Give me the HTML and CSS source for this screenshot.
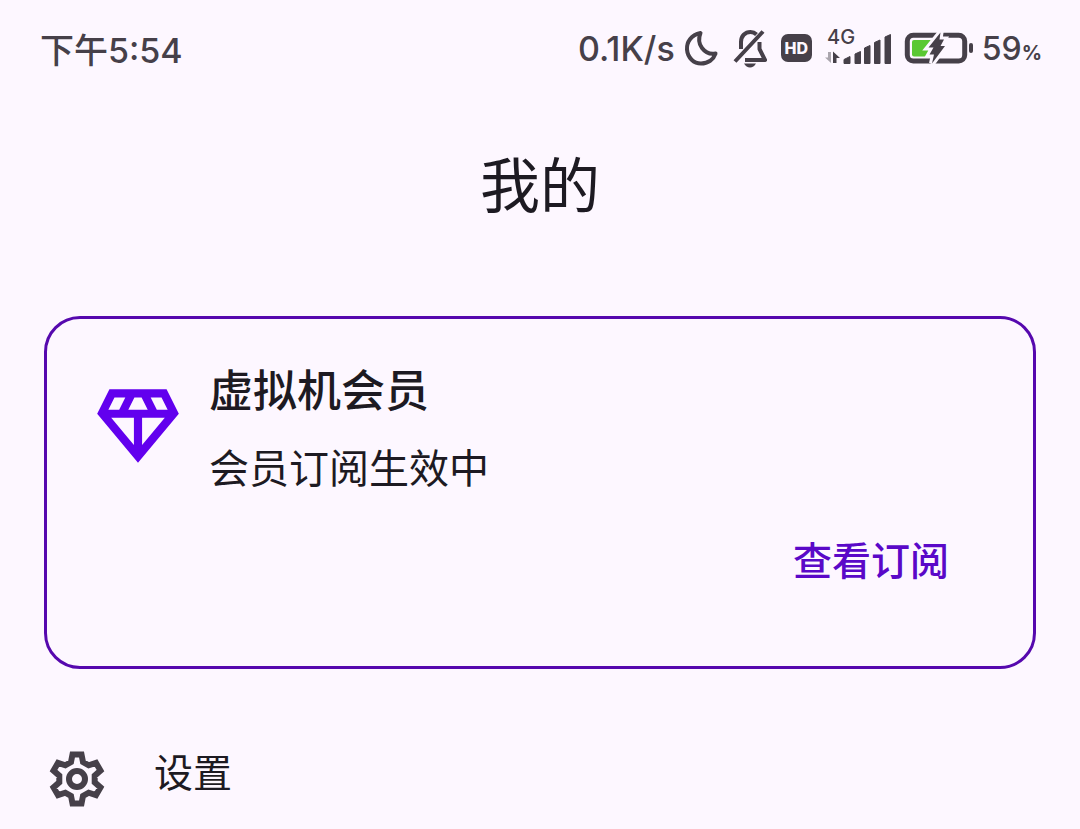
FILE: index.html
```
<!DOCTYPE html>
<html lang="zh-CN">
<head>
    <meta charset="UTF-8">
    <meta name="viewport" content="width=device-width, initial-scale=1">
    <title>我的</title>
    <link rel="stylesheet" href="styles.css">
</head>
<body>
    <header class="status-bar">
        <span class="clock">下午5:54</span>
        <div class="status-icons">
            <span class="net-speed">0.1K/s</span>
            <svg class="icon-moon" width="36" height="38" viewBox="0 0 36 38" aria-hidden="true">
                <path class="line" d="M17.5 4C8 6 3.5 13 4 20.5C4.700 29 11 34.500 18 34.500C25 34.500 30.500 30.500 32.500 24.500C27 25.500 22 23 19 19C16 15 15.500 9 17.500 4Z"/>
            </svg>
            <svg class="icon-mute" width="36" height="38" viewBox="0 0 36 38" aria-hidden="true">
                <path class="line" d="M9 20V13C9 7 13 3 18.500 3C21 3 23 4 24.500 5.500M31 2.500L3 32.500M27.500 13V20L33 31H13"/>
                <path d="M12 34.500H24C22.500 37 20.500 38.500 18 38.500S13.500 37 12 34.500Z"/>
            </svg>
            <span class="hd">HD</span>
            <svg class="icon-signal" width="67" height="38" viewBox="0 0 67 38" aria-hidden="true">
                <text class="net-type" x="2" y="15">4G</text>
                <path class="dim" d="M3 23H6V34L0 28.500H3Z"/>
                <path d="M8 34V22.500L15 29H11.500V34Z"/>
                <path class="bars" d="M19 34.500V30.500L25 27.500V34.500ZM30 34.500V25L35.500 22.500V34.500ZM39.500 34.500V19L45 16.500V34.500ZM49.500 34.500V13.500L55 11V34.500ZM60 34.500V8L65.500 5.500V34.500Z"/>
            </svg>
            <svg class="icon-battery" width="68" height="38" viewBox="0 0 68 38" aria-hidden="true">
                <rect class="shell" x="2.300" y="6.300" width="57.400" height="25.600" rx="6"/>
                <rect class="charge" x="7" y="11" width="20" height="16.500" rx="2"/>
                <rect x="64" y="14" width="4" height="10" rx="2"/>
                <path class="bolt" d="M35.500 3.500L23.500 18.500H28.500L24.500 25.500H29L27 34.500L40 17H35.500L39 10.500H34.500Z"/>
                <path d="M35.500 3.500L23.500 18.500H28.500L24.500 25.500H29L27 34.500L40 17H35.500L39 10.500H34.500Z"/>
            </svg>
            <span class="level">59<small>%</small></span>
        </div>
    </header>

    <main>
        <h1 class="page-title">我的</h1>

        <section class="card">
            <svg class="card-icon" width="98" height="98" viewBox="0 0 24 24" aria-hidden="true">
                <path d="M19 3H5L2 9l10 12L22 9l-3-6zM9.620 8l1.500-3h1.760l1.500 3H9.620zM11 10v6.680L5.440 10H11zm2 0h5.560L13 16.680V10zm6.260-2h-2.650l-1.500-3h2.650l1.500 3zM6.240 5h2.650l-1.500 3H4.740l1.500-3z"/>
            </svg>
            <div class="card-body">
                <h2 class="card-title">虚拟机会员</h2>
                <p class="card-text">会员订阅生效中</p>
                <button class="card-action" type="button">查看订阅</button>
            </div>
        </section>

        <nav class="menu">
            <a class="menu-item" href="#settings">
                <svg class="menu-icon" width="58" height="58" viewBox="-29 -29 58 58" aria-hidden="true">
                    <path d="M-6-17L-4.500-24.500H4.500L6-17L11.700-13.700L19-16.100L23.500-8.400L17.700-3.300V3.300L23.500 8.400L19 16.100L11.700 13.700L6 17L4.500 24.500H-4.500L-6 17L-11.700 13.700L-19 16.100L-23.500 8.400L-17.700 3.300V-3.300L-23.500-8.400L-19-16.100L-11.700-13.700Z"/>
                    <circle r="8"/>
                </svg>
                <span>设置</span>
            </a>
        </nav>
    </main>
</body>
</html>
```

FILE: styles.css
```
* {
    box-sizing: border-box;
}

body {
    margin: 0;
    background: #fdf7ff;
    color: #1d1a22;
    font-family: "Noto Sans CJK SC", sans-serif;
}

h1, h2, p {
    margin: 0;
    font-weight: 400;
}

.status-bar {
    display: flex;
    justify-content: space-between;
    align-items: center;
    height: 96px;
    padding: 0 38px 0 40px;
    color: #464049;
    font-family: Inter, "Noto Sans CJK SC", sans-serif;
    font-size: 34px;
    font-weight: 500;
}

.status-icons {
    display: flex;
    align-items: center;
    gap: 13px;
}

.status-icons svg {
    overflow: visible;
    fill: #464049;
}

.net-speed {
    margin-right: -5px;
}

.status-icons .line {
    fill: none;
    stroke: #464049;
    stroke-width: 4;
    stroke-linejoin: round;
}

.status-icons .bars {
    stroke: #464049;
    stroke-linejoin: round;
}

.hd {
    width: 31px;
    border-radius: 7px;
    background: #464049;
    color: #fdf7ff;
    font-size: 16px;
    font-weight: 800;
    line-height: 28px;
    text-align: center;
}

.net-type {
    font-size: 20px;
}

.status-icons .dim {
    fill: #aaa5ad;
}

.status-icons .shell {
    fill: none;
    stroke: #464049;
    stroke-width: 5;
}

.status-icons .charge {
    fill: #5ac832;
}

.status-icons .bolt {
    fill: #fdf7ff;
    stroke: #fdf7ff;
    stroke-width: 6;
}

.level {
    margin-left: -4px;
    font-size: 32px;
}

.level small {
    font-size: 20px;
    font-weight: 700;
}

.page-title {
    margin-top: 46px;
    font-size: 60px;
    line-height: 80px;
    text-align: center;
}

.card {
    display: flex;
    gap: 22px;
    margin: 94px 44px 0;
    padding: 39px 42px 68px;
    border: 3px solid #5608ae;
    border-radius: 36px;
}

.card-icon {
    flex: none;
    margin-top: 19px;
    fill: #6200ee;
}

.card-body {
    display: flex;
    flex: 1;
    flex-direction: column;
}

.card-title {
    font-size: 44px;
    font-weight: 500;
    line-height: 60px;
}

.card-text {
    margin-top: 20px;
    font-size: 40px;
    line-height: 56px;
}

.card-action {
    align-self: flex-end;
    margin-top: 24px;
    padding: 0 42px;
    border: 0;
    background: none;
    color: #5a08c8;
    font: inherit;
    font-size: 39px;
    font-weight: 500;
    line-height: 80px;
}

.menu {
    padding: 63px 48px 0;
}

.menu-item {
    display: flex;
    align-items: flex-end;
    gap: 48px;
    color: inherit;
    font-size: 39px;
    line-height: 76px;
    text-decoration: none;
}

.menu-icon {
    fill: none;
    stroke: #464049;
    stroke-width: 6;
}
```
